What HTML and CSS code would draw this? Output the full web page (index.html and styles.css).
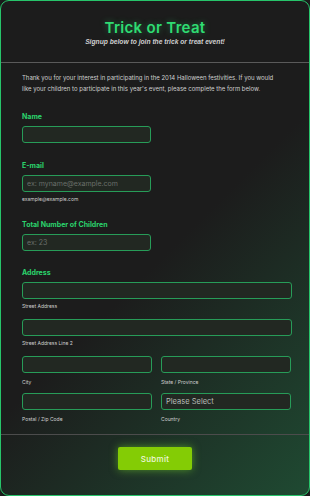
FILE: index.html
```html
<!DOCTYPE html>
<html>
<head>
<meta charset="utf-8">
<link rel="stylesheet" href="styles.css">
</head>
<body>
<div class="card">
  <header class="header">
    <h1 class="title">Trick or Treat</h1>
    <p class="subtitle">Signup below to join the trick or treat event!</p>
  </header>
  <main class="body">
    <p class="intro">Thank you for your interest in participating in the 2014 Halloween festivities. If you would like your children to participate in this year's event, please complete the form below.</p>

    <div class="field f-name">
      <label class="label">Name</label>
      <div class="input short"></div>
    </div>

    <div class="field f-email">
      <label class="label">E-mail</label>
      <div class="input short"><span class="ph">ex: myname@example.com</span></div>
      <span class="sub">example@example.com</span>
    </div>

    <div class="field f-kids">
      <label class="label">Total Number of Children</label>
      <div class="input short"><span class="ph">ex: 23</span></div>
    </div>

    <div class="field f-addr">
      <label class="label">Address</label>
      <div class="input"></div>
      <span class="sub">Street Address</span>
      <div class="input gap"></div>
      <span class="sub">Street Address Line 2</span>
      <div class="grid">
        <div class="cell"><div class="input"></div><span class="sub">City</span></div>
        <div class="cell"><div class="input"></div><span class="sub">State / Province</span></div>
        <div class="cell"><div class="input"></div><span class="sub">Postal / Zip Code</span></div>
        <div class="cell"><div class="input"><span class="sel">Please Select</span></div><span class="sub">Country</span></div>
      </div>
    </div>
  </main>
  <footer class="footer">
    <button class="submit">Submit</button>
  </footer>
</div>
</body>
</html>
```
FILE: styles.css
```css
* { box-sizing: border-box; }
html, body { margin: 0; padding: 0; background: #1b1b1b; }
body { font-family: Inter, "Liberation Sans", sans-serif; width: 310px; height: 496px; }
.card {
  width: 310px; height: 496px;
  border: 1px solid #27c46a;
  border-radius: 9px;
  background: linear-gradient(135deg, #1c1c1c 0%, #1c1c1c 52%, #1f4a32 100%);
  display: flex; flex-direction: column;
  overflow: hidden;
}
.header {
  height: 62px;
  border-bottom: 1px solid #5a5a5a;
  text-align: center;
  padding-top: 18px;
}
.title {
  margin: 0;
  font-size: 15px; font-weight: 600;
  color: #2fdc72;
  letter-spacing: 0.3px;
  line-height: 18px;
  text-shadow: 0 0 6px rgba(47,220,114,0.4);
}
.subtitle {
  margin: 0;
  font-family: "Liberation Sans", Arial, sans-serif;
  font-style: italic; font-weight: 700;
  font-size: 6.7px; line-height: 10px;
  color: #cfcfcf;
}
.body { padding: 9px 26px 0 21px; flex: 1; }
.intro {
  margin: 0;
  font-size: 6px; line-height: 11px;
  color: #cfcfcf;
}
.field { display: flex; flex-direction: column; align-items: flex-start; }
.f-name { margin-top: 18px; }
.f-email { margin-top: 18px; }
.f-kids { margin-top: 17px; }
.f-addr { margin-top: 17px; }
.label {
  font-size: 7px; font-weight: 700; color: #2bd46d;
  line-height: 9px; margin-bottom: 5px;
}
.input {
  width: 100%; height: 17px;
  border: 1px solid #279c58;
  border-radius: 3px;
  background: #222822;
  display: flex; align-items: center; padding-left: 4px;
}
.f-addr .input { width: 270px; }
.f-addr .grid .input { width: 100%; }
.input.short { width: 129px; }
.ph { font-size: 7px; color: #6a6f6a; }
.sel { font-size: 7.5px; color: #b8bcb8; }
.sub { font-size: 5px; color: #cfcfcf; line-height: 7px; margin-top: 4px; }
.input.gap { margin-top: 9px; }
.grid {
  width: 270px;
  display: grid; grid-template-columns: 130px 130px; column-gap: 9px; row-gap: 7px;
  margin-top: 9px;
}
.grid .sub { margin-top: 6px; }
.cell { display: flex; flex-direction: column; }
.footer {
  height: 61px;
  flex: none;
  border-top: 1px solid #4c4c4c;
  display: flex; justify-content: center; align-items: flex-start;
  padding-top: 12px;
}
.submit {
  width: 74px; height: 23px;
  border: none; border-radius: 2px;
  background: #84cc05;
  color: #eef7dc;
  font-family: Inter, "Liberation Sans", sans-serif;
  font-size: 8px; font-weight: 500; letter-spacing: 0.3px;
  box-shadow: 0 0 8px rgba(120,220,40,0.55);
}
```
